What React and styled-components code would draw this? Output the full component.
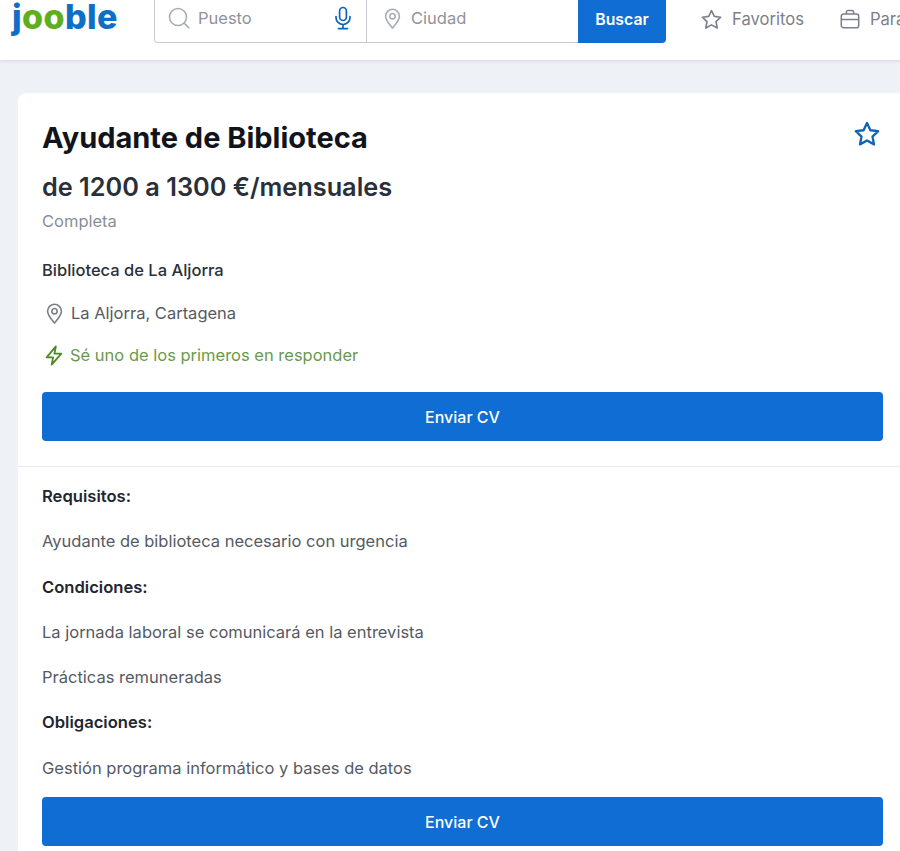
import styled, { createGlobalStyle } from "styled-components";

const GlobalStyle = createGlobalStyle`
  html, body {
    margin: 0;
    padding: 0;
    width: 900px;
    height: 851px;
    overflow: hidden;
    background: #eef1f6;
    font-family: "Inter", "Liberation Sans", sans-serif;
  }
  * { box-sizing: border-box; }
`;

const JobDetails = [
  { kind: "title", text: "Requisitos:" },
  { kind: "line", text: "Ayudante de biblioteca necesario con urgencia" },
  { kind: "title", text: "Condiciones:" },
  { kind: "line", text: "La jornada laboral se comunicará en la entrevista" },
  { kind: "line", text: "Prácticas remuneradas" },
  { kind: "title", text: "Obligaciones:" },
  { kind: "line", text: "Gestión programa informático y bases de datos" },
];

const StarIcon = ({ size = 22, color = "#7c808a", width = 1.7 }) => (
  <svg width={size} height={size} viewBox="0 0 24 24" fill="none" stroke={color} strokeWidth={width} strokeLinejoin="round">
    <path d="M12 2.6l2.9 6.2 6.7.8-4.9 4.6 1.3 6.7-6-3.3-6 3.3 1.3-6.7-4.9-4.6 6.7-.8z" />
  </svg>
);

const PinIcon = ({ size = 22, color = "#7c808a" }) => (
  <svg width={size} height={size} viewBox="0 0 24 24" fill="none" stroke={color} strokeWidth="1.7" strokeLinejoin="round">
    <path d="M12 22c-1-1.6-7.2-7.6-7.2-12.4a7.2 7.2 0 0 1 14.4 0C19.2 14.4 13 20.4 12 22z" />
    <circle cx="12" cy="9.6" r="2.8" />
  </svg>
);

const App = () => {
  return (
    <>
      <GlobalStyle />
      <Header>
        <Logo>
          <LogoPart $color="#0f6fc6">j</LogoPart>
          <LogoPart $color="#5fae1c">oo</LogoPart>
          <LogoPart $color="#0f6fc6">ble</LogoPart>
        </Logo>
        <SearchForm>
          <Field $width="213px">
            <svg width="24" height="24" viewBox="0 0 24 24" fill="none" stroke="#a9adb5" strokeWidth="1.6" strokeLinecap="round">
              <circle cx="11" cy="11" r="8.5" />
              <path d="M17.4 17.4l4.4 4.4" />
            </svg>
            <Placeholder>Puesto</Placeholder>
            <MicButton>
              <svg width="20" height="24" viewBox="0 0 20 24" fill="none" stroke="#0f63b8" strokeWidth="1.7" strokeLinecap="round">
                <rect x="6.6" y="1.5" width="6.8" height="13" rx="3.4" />
                <path d="M3 10.5v1a7 7 0 0 0 14 0v-1M10 18.5v4M5.5 22.6h9" />
              </svg>
            </MicButton>
          </Field>
          <Field $width="211px" $last>
            <PinIcon size={23} color="#a9adb5" />
            <Placeholder>Ciudad</Placeholder>
          </Field>
          <SearchButton>Buscar</SearchButton>
        </SearchForm>
        <NavLink>
          <StarIcon size={23} />
          Favoritos
        </NavLink>
        <NavLink>
          <svg width="22" height="22" viewBox="0 0 24 24" fill="none" stroke="#7c808a" strokeWidth="1.7" strokeLinejoin="round">
            <rect x="2.5" y="6.5" width="19" height="15" rx="2.5" />
            <path d="M8 6.5V4.5a1.8 1.8 0 0 1 1.8-1.8h4.4A1.8 1.8 0 0 1 16 4.5v2M2.5 12.5h19" />
          </svg>
          Para empresas
        </NavLink>
      </Header>
      <Card>
        <Summary>
          <TitleRow>
            <Title>Ayudante de Biblioteca</Title>
            <SaveButton>
              <StarIcon size={28} color="#0f63b8" width={2} />
            </SaveButton>
          </TitleRow>
          <Salary>de 1200 a 1300 €/mensuales</Salary>
          <Schedule>Completa</Schedule>
          <Company>Biblioteca de La Aljorra</Company>
          <InfoRow>
            <PinIcon size={23} />
            La Aljorra, Cartagena
          </InfoRow>
          <InfoRow $green>
            <svg width="22" height="23" viewBox="0 0 24 24" fill="none" stroke="#4f8a24" strokeWidth="2" strokeLinejoin="round">
              <path d="M14 2L4 14h7l-1.5 8L20 10h-7.5z" />
            </svg>
            Sé uno de los primeros en responder
          </InfoRow>
          <ApplyButton>Enviar CV</ApplyButton>
        </Summary>
        <Description>
          {JobDetails.map((item) =>
            item.kind === "title" ? (
              <DetailTitle key={item.text}>{item.text}</DetailTitle>
            ) : (
              <DetailLine key={item.text}>{item.text}</DetailLine>
            )
          )}
          <ApplyButton $tight>Enviar CV</ApplyButton>
        </Description>
      </Card>
    </>
  );
};

export default App;

const Header = styled.header`
  display: flex;
  align-items: flex-start;
  width: 900px;
  height: 60px;
  padding-left: 12px;
  background: #fff;
  box-shadow: 0 1px 3px rgba(40, 50, 70, 0.14);
  overflow: hidden;
  white-space: nowrap;
`;

const Logo = styled.div`
  width: 142px;
  flex-shrink: 0;
  font-family: "Inter", sans-serif;
  font-size: 34px;
  font-weight: 800;
  line-height: 33px;
  letter-spacing: 0.4px;
`;

const LogoPart = styled.span`
  color: ${(props) => props.$color};
`;

const SearchForm = styled.form`
  display: flex;
  width: 512px;
  height: 43px;
  flex-shrink: 0;
`;

const Field = styled.div`
  display: flex;
  align-items: center;
  gap: 7px;
  width: ${(props) => props.$width};
  padding: 0 13px 6px 12px;
  background: #fff;
  border: 1px solid #c6c9cf;
  border-top: none;
  border-left: ${(props) => (props.$last ? "none" : "1px solid #c6c9cf")};
  border-right: ${(props) => (props.$last ? "none" : "1px solid #c6c9cf")};
  border-bottom-left-radius: ${(props) => (props.$last ? "0" : "4px")};
  ${(props) => props.$last && "padding-left: 14px;"}
`;

const Placeholder = styled.span`
  flex: 1;
  font-size: 16.5px;
  color: #8f939b;
`;

const MicButton = styled.span`
  display: flex;
`;

const SearchButton = styled.button`
  width: 88px;
  padding: 0 0 5px;
  border: none;
  border-bottom-right-radius: 4px;
  background: #0f6dd3;
  color: #fff;
  font-family: inherit;
  font-size: 15.8px;
  font-weight: 600;
`;

const NavLink = styled.div`
  display: flex;
  align-items: center;
  gap: 9px;
  height: 38px;
  margin-left: 34px;
  flex-shrink: 0;
  font-size: 16.6px;
  color: #7c808a;

  & + & {
    margin-left: 35px;
  }
`;

const Card = styled.main`
  width: 889px;
  margin: 33px 0 0 18px;
  background: #fff;
  border-radius: 8px;
`;

const Summary = styled.section`
  padding: 24px 24px 25px;
  border-bottom: 1px solid #e9ebef;
`;

const TitleRow = styled.div`
  display: flex;
  justify-content: space-between;
  align-items: flex-start;
`;

const Title = styled.h1`
  margin: 0;
  font-size: 29px;
  font-weight: 700;
  line-height: 42px;
  color: #11141a;
`;

const SaveButton = styled.span`
  display: flex;
  margin: 3px 2px 0 0;
`;

const Salary = styled.div`
  margin-top: 12px;
  font-size: 25.3px;
  font-weight: 600;
  line-height: 32px;
  color: #2b2f38;
`;

const Schedule = styled.div`
  margin-top: 7px;
  font-size: 16.5px;
  line-height: 22px;
  color: #8a8e96;
`;

const Company = styled.div`
  margin-top: 27px;
  font-size: 16.5px;
  font-weight: 500;
  line-height: 22px;
  color: #2b2f38;
`;

const InfoRow = styled.div`
  display: flex;
  align-items: center;
  gap: 5px;
  margin-top: 20px;
  height: 24px;
  margin-left: 1px;
  font-size: 16.5px;
  color: ${(props) => (props.$green ? "#6b9a4c" : "#565a63")};

  & + & {
    margin-top: 18px;
  }
`;

const ApplyButton = styled.button`
  display: block;
  width: 100%;
  height: 49px;
  margin-top: ${(props) => (props.$tight ? "0" : "25px")};
  border: none;
  border-radius: 4px;
  background: #0f6dd3;
  color: #fff;
  font-family: inherit;
  font-size: 16px;
  font-weight: 500;
`;

const Description = styled.section`
  padding: 18px 24px 24px;
`;

const DetailTitle = styled.p`
  margin: 0 0 23.3px;
  font-size: 16.6px;
  font-weight: 600;
  line-height: 22px;
  color: #22262e;
`;

const DetailLine = styled.p`
  margin: 0 0 23.3px;
  font-size: 16.5px;
  line-height: 22px;
  color: #565a63;

  &:last-of-type {
    margin-bottom: 18.5px;
  }
`;
